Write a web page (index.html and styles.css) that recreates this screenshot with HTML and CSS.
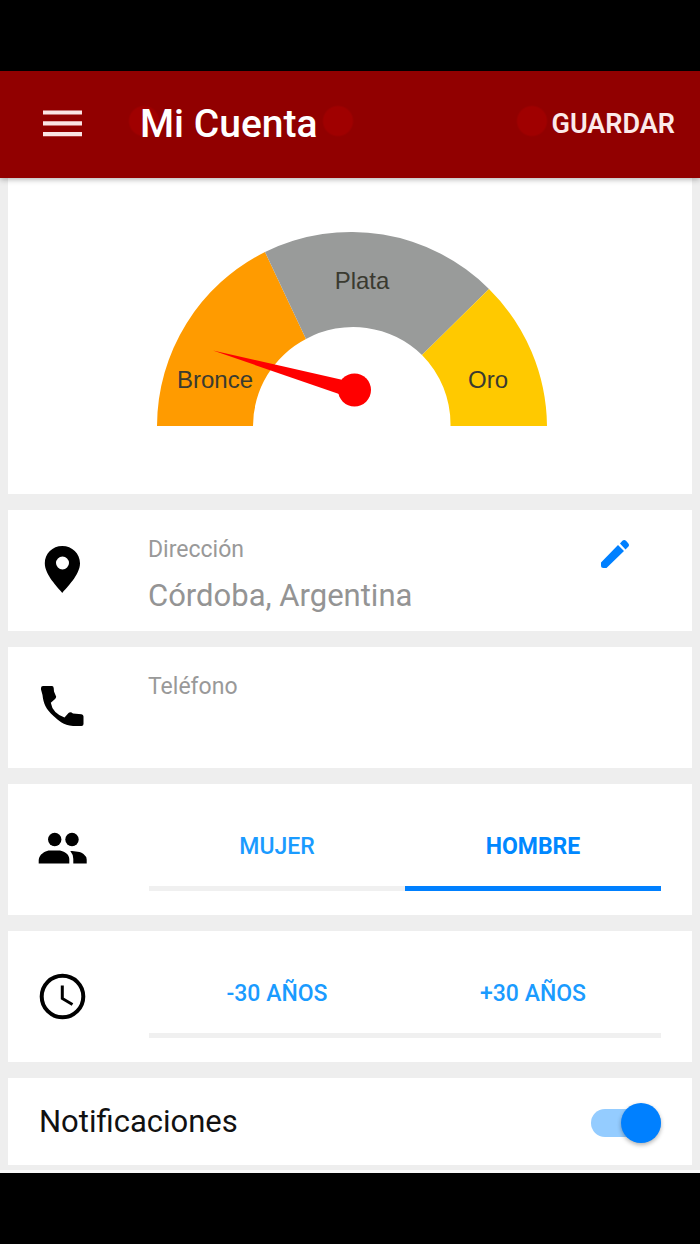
FILE: index.html
```html
<!DOCTYPE html>
<html lang="es">
<head>
<meta charset="utf-8">
<meta name="viewport" content="width=device-width, initial-scale=1">
<title>Mi Cuenta</title>
<link rel="stylesheet" href="styles.css">
</head>
<body>
<form class="screen">
  <header class="appbar">
    <button class="menu" type="button" aria-label="Menú">
      <svg class="menu-icon" viewBox="0 0 38 26" aria-hidden="true"><path d="M0 2.500h38M0 13h38M0 23.500h38"/></svg>
    </button>
    <h1 class="title">Mi Cuenta</h1>
    <button class="save" type="submit">GUARDAR</button>
  </header>
  <main class="content">
    <section class="card card-gauge">
      <svg class="gauge" viewBox="0 0 396 200" role="img" aria-label="Nivel: Bronce">
        <path fill="#ff9b00" d="M5 196A195 195 0 0 1 113 22L154 109A98 98 0 0 0 101 196Z"/>
        <path fill="#999b9a" d="M113 22A195 195 0 0 1 337 59L270 125A98.500 98.500 0 0 0 154 109Z"/>
        <path fill="#ffc900" d="M337 59A195 195 0 0 1 395 196H298.500A98.500 98.500 0 0 0 270 125Z"/>
        <text class="gauge-label" x="63" y="158">Bronce</text>
        <text class="gauge-label" x="210" y="59">Plata</text>
        <text class="gauge-label" x="336" y="158">Oro</text>
        <path fill="#f00" d="M61 120.500L191 150L187 164Z"/>
        <circle fill="#f00" cx="202.500" cy="160" r="16.500"/>
      </svg>
    </section>

    <section class="card row">
      <svg class="icon" viewBox="0 0 50 50" aria-hidden="true"><path fill-rule="evenodd" d="M24.300 1C14.500 1 6.800 8.500 6.800 18.300C6.800 30 20 42.500 24.300 48C28.600 42.500 42 30 42 18.300C42 8.500 34.100 1 24.300 1zM24.500 11.500a6.500 6.500 0 1 1 0 13a6.500 6.500 0 0 1 0-13z"/></svg>
      <div class="field">
        <label class="field-label" for="direccion">Dirección</label>
        <input class="field-input" id="direccion" type="text" value="Córdoba, Argentina">
      </div>
      <button class="edit" type="button" aria-label="Editar dirección">
        <svg class="edit-icon" viewBox="0 0 28 28" aria-hidden="true"><path d="M0 22.500v3q0 2.500 2.500 2.500H5.500L23 11 17 5zM24.500 9.500l2.700-2.700q1.600-1.800 0-3.600L25 .8q-1.800-1.600-3.600 0L19 3.500z"/></svg>
      </button>
    </section>

    <section class="card row">
      <svg class="icon" viewBox="0 0 50 50" aria-hidden="true"><path d="M5 4H14Q15.500 4 15.700 6L16 9.500L18.200 14.700Q18 16.500 16.500 17.500L12.800 20.700Q14.500 31 26.500 35.500L30.500 31Q32.500 29.500 35 31.500L43.500 32.300Q45.500 32.500 45.500 34.500V42Q45.500 44 43.500 44H35C25 43 21 39 15.500 34C8 27 5.500 22 4.500 13L3 7.500V6Q3 4 5 4z"/></svg>
      <div class="field">
        <label class="field-label" for="telefono">Teléfono</label>
        <input class="field-input" id="telefono" type="tel">
      </div>
    </section>

    <section class="card row row-choice">
      <svg class="icon" viewBox="0 0 50 50" aria-hidden="true"><circle cx="16.700" cy="14.500" r="6.700"/><circle cx="34" cy="14.500" r="6.700"/><path d="M.7 38.500V35C1.200 29 7 26.500 10.500 25.500H22C26 26.300 31.300 29 31.300 34V38.500zM32.300 26C37 26.300 43 26.500 45.500 29Q48.700 31.500 48.700 34.500V38.500H35.300V34Q35.300 29.500 32.300 26z"/></svg>
      <div class="choices" role="radiogroup" aria-label="Sexo">
        <label class="choice"><input class="choice-input" type="radio" name="sexo" value="mujer"><span class="choice-text">MUJER</span></label>
        <label class="choice"><input class="choice-input" type="radio" name="sexo" value="hombre" checked><span class="choice-text">HOMBRE</span></label>
      </div>
    </section>

    <section class="card row row-choice">
      <svg class="icon" viewBox="0 0 50 50" aria-hidden="true"><circle class="clock-line" cx="24.500" cy="24.500" r="20.800"/><path class="clock-line clock-hands" d="M24.300 13.500V26.500L34.500 32.500"/></svg>
      <div class="choices" role="radiogroup" aria-label="Edad">
        <label class="choice"><input class="choice-input" type="radio" name="edad" value="menos30"><span class="choice-text">-30 AÑOS</span></label>
        <label class="choice"><input class="choice-input" type="radio" name="edad" value="mas30"><span class="choice-text">+30 AÑOS</span></label>
      </div>
    </section>

    <section class="card row-switch">
      <label class="switch-label" for="notificaciones">Notificaciones</label>
      <input class="switch" id="notificaciones" type="checkbox" role="switch" checked>
    </section>
  </main>
</form>
</body>
</html>
```

FILE: styles.css
```css
* {
  box-sizing: border-box;
}

body {
  margin: 0;
  padding: 71px 0;
  background: #000;
  font-family: Roboto, "Liberation Sans", sans-serif;
}

button {
  padding: 0;
  border: 0;
  background: none;
  font: inherit;
  cursor: pointer;
}

svg {
  display: block;
}

.appbar {
  position: relative;
  display: flex;
  align-items: center;
  height: 107px;
  padding: 0 25px 2px 43px;
  color: #fff;
  background:
    radial-gradient(circle at 144px 50px, #a00000 14px, transparent 16px),
    radial-gradient(circle at 338px 50px, #a00000 14px, transparent 16px),
    radial-gradient(circle at 532px 50px, #a00000 14px, transparent 16px),
    #910000;
  box-shadow: 0 1px 6px rgba(0, 0, 0, 0.35);
}

.menu {
  width: 39px;
}

.menu-icon {
  width: 39px;
  fill: none;
  stroke: #fbe4e4;
  stroke-width: 4;
}

.title {
  flex: 1;
  margin: 0 0 0 58px;
  font-size: 39px;
  line-height: 48px;
  font-weight: 500;
}

.save {
  color: #fbeaea;
  font-size: 27px;
  font-weight: 600;
}

.content {
  display: flex;
  flex-direction: column;
  gap: 16px;
  padding: 0 8px 5px;
  background: #eee;
  border-bottom: 3px solid #fafafa;
}

.card {
  background: #fff;
}

.card-gauge {
  padding: 52px 0 64px;
}

.gauge {
  width: 396px;
  max-width: 100%;
  margin: 0 auto;
}

.gauge-label {
  fill: #3a3a30;
  font-family: "Liberation Sans", Arial, sans-serif;
  font-size: 24px;
  text-anchor: middle;
}

.row {
  display: flex;
  align-items: flex-start;
  min-height: 121px;
  padding: 24px 31px 8px 30px;
}

.icon {
  flex: none;
  width: 50px;
  height: 50px;
  margin-top: 11px;
}

.clock-line {
  fill: none;
  stroke: #000;
  stroke-width: 4;
}

.clock-hands {
  stroke-width: 3;
}

.field {
  flex: 1;
  display: flex;
  flex-direction: column;
  gap: 10px;
  margin-left: 60px;
}

.field-label {
  color: #999;
  font-size: 23px;
  line-height: 32px;
}

.field-input {
  width: 100%;
  height: 40px;
  padding: 0;
  border: 0;
  outline: 0;
  background: none;
  color: #949494;
  font: 31px/40px Roboto, "Liberation Sans", sans-serif;
}

.edit {
  margin: 6px 32px 0 0;
}

.edit-icon {
  width: 28px;
  height: 28px;
  fill: #0080ff;
}

.row-choice {
  min-height: 131px;
  align-items: center;
  padding-top: 24px;
  padding-bottom: 24px;
}

.row-choice .icon {
  margin: 0;
}

.choices {
  flex: 1;
  display: flex;
  margin-left: 61px;
}

.choice {
  flex: 1;
  display: flex;
  justify-content: center;
  padding: 23px 0;
  border-bottom: 5px solid #f0f0f0;
  color: #1a9bff;
  font-size: 23px;
  line-height: 32px;
  font-weight: 500;
  cursor: pointer;
}

.choice:has(.choice-input:checked) {
  border-color: #0080ff;
  color: #0088ff;
  font-weight: 700;
}

.choice-input {
  appearance: none;
  width: 0;
  height: 0;
  margin: 0;
}

.row-switch {
  display: flex;
  align-items: center;
  justify-content: space-between;
  min-height: 87px;
  padding: 0 31px;
}

.switch-label {
  color: #111;
  font-size: 31px;
  line-height: 40px;
}

.switch {
  appearance: none;
  display: flex;
  align-items: center;
  justify-content: flex-end;
  width: 70px;
  height: 28px;
  margin: 2px 0 0;
  border-radius: 14px;
  background: #94ccff;
  cursor: pointer;
}

.switch::before {
  content: "";
  flex: none;
  width: 40px;
  height: 40px;
  border-radius: 50%;
  background: #0080ff;
  box-shadow: 0 2px 4px rgba(0, 0, 0, 0.3);
}

.switch:not(:checked) {
  justify-content: flex-start;
  background: #ccc;
}
```
